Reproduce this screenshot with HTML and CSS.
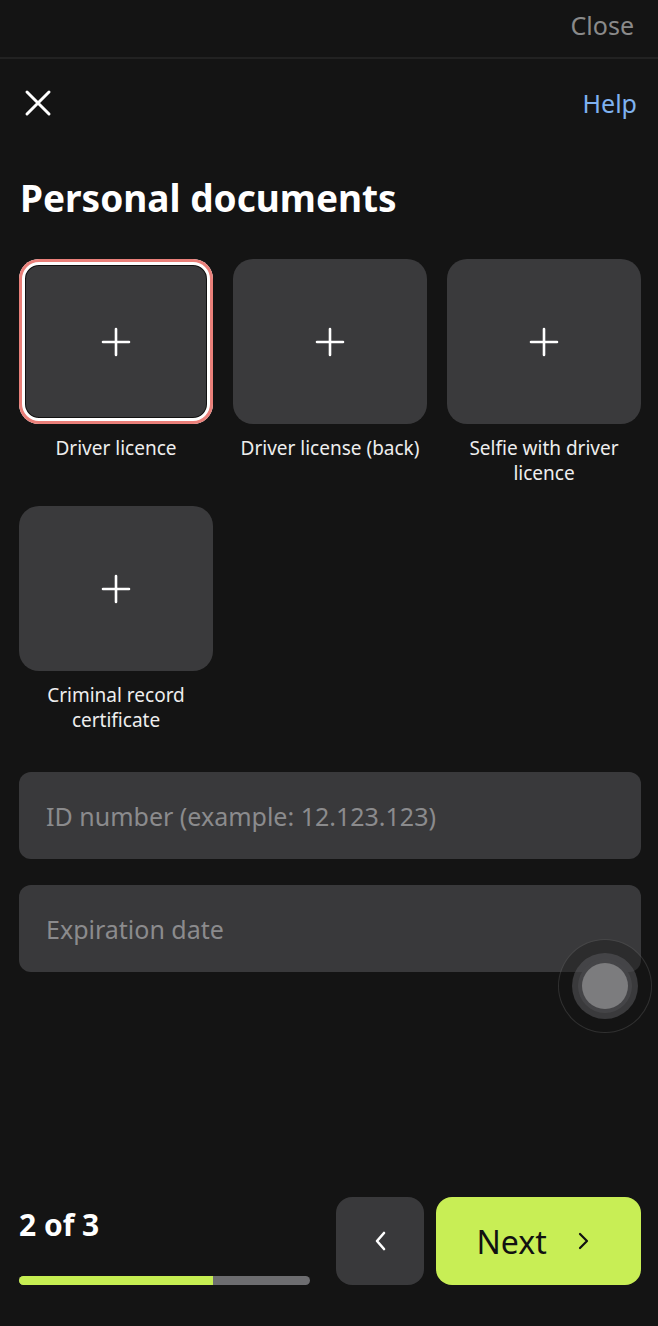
FILE: index.html
```html
<!DOCTYPE html>
<html>
<head>
    <title>Personal documents</title>
    <link rel="stylesheet" href="styles.css">
</head>
<body>
    <div class="page">
        <div class="topbar">
            <span class="close-link">Close</span>
        </div>

        <div class="header">
            <svg class="x-icon" width="28" height="28" viewBox="0 0 28 28">
                <path d="M3 3 L25 25 M25 3 L3 25" stroke="#fff" stroke-width="3" stroke-linecap="round"/>
            </svg>
            <span class="help">Help</span>
        </div>

        <h1>Personal documents</h1>

        <div class="grid">
            <div class="doc">
                <div class="tile selected">
                    <svg class="plus" width="30" height="30" viewBox="0 0 30 30"><path d="M15 2 V28 M2 15 H28" stroke="#fff" stroke-width="2.6" stroke-linecap="round"/></svg>
                </div>
                <div class="label">Driver licence</div>
            </div>
            <div class="doc">
                <div class="tile">
                    <svg class="plus" width="30" height="30" viewBox="0 0 30 30"><path d="M15 2 V28 M2 15 H28" stroke="#fff" stroke-width="2.6" stroke-linecap="round"/></svg>
                </div>
                <div class="label">Driver license (back)</div>
            </div>
            <div class="doc">
                <div class="tile">
                    <svg class="plus" width="30" height="30" viewBox="0 0 30 30"><path d="M15 2 V28 M2 15 H28" stroke="#fff" stroke-width="2.6" stroke-linecap="round"/></svg>
                </div>
                <div class="label">Selfie with driver licence</div>
            </div>
            <div class="doc">
                <div class="tile">
                    <svg class="plus" width="30" height="30" viewBox="0 0 30 30"><path d="M15 2 V28 M2 15 H28" stroke="#fff" stroke-width="2.6" stroke-linecap="round"/></svg>
                </div>
                <div class="label">Criminal record certificate</div>
            </div>
        </div>

        <div class="fields">
            <div class="field">ID number (example: 12.123.123)</div>
            <div class="field">Expiration date</div>
        </div>

        <div class="spacer"></div>

        <div class="footer">
            <div class="progress">
                <div class="step">2 of 3</div>
                <div class="bar"><div class="bar-fill" style="width: 66.7%"></div></div>
            </div>
            <div class="btn back">
                <svg width="14" height="22" viewBox="0 0 14 22"><path d="M11 3 L4 11 L11 19" fill="none" stroke="#fff" stroke-width="2.6" stroke-linecap="round" stroke-linejoin="round"/></svg>
            </div>
            <div class="btn next">
                <span>Next</span>
                <svg width="14" height="22" viewBox="0 0 14 22"><path d="M3 4 L10 11 L3 18" fill="none" stroke="#111" stroke-width="2.2" stroke-linecap="round" stroke-linejoin="round"/></svg>
            </div>
        </div>

        <div class="touch">
            <div class="touch-mid"><div class="touch-dot"></div></div>
        </div>
    </div>
</body>
</html>
```

FILE: styles.css
```css
body {
    margin: 0;
    background-color: #141414;
    font-family: "Noto Sans", "Open Sans", sans-serif;
    color: #fff;
}
.page {
    position: relative;
    height: 1326px;
    display: flex;
    flex-direction: column;
}
.topbar {
    height: 59px;
    border-bottom: 2px solid #222;
    display: flex;
    justify-content: flex-end;
    align-items: flex-start;
    padding-right: 24px;
    box-sizing: border-box;
}
.close-link {
    color: #8a8a8a;
    font-size: 25px;
    line-height: 50px;
}
.header {
    height: 88px;
    display: flex;
    justify-content: space-between;
    align-items: center;
    padding: 0 21px 0 24px;
}
.help {
    color: #7fb2f0;
    font-size: 25px;
}
h1 {
    margin: 26px 20px 0;
    font-size: 37px;
    font-weight: 700;
    line-height: 50px;
}
.grid {
    display: grid;
    grid-template-columns: repeat(3, 194px);
    column-gap: 20px;
    row-gap: 20px;
    padding: 0 17px 0 19px;
    margin-top: 36px;
}
.tile {
    height: 165px;
    border-radius: 20px;
    background-color: #3a3a3c;
    display: flex;
    align-items: center;
    justify-content: center;
}
.tile.selected {
    box-shadow: inset 0 0 0 3px #ea807a, inset 0 0 0 6px #fff, inset 0 0 0 7px #111;
}
.label {
    margin-top: 12px;
    font-size: 19px;
    line-height: 25px;
    text-align: center;
    color: #eee;
    padding: 0 2px;
}
.fields {
    margin: 39px 17px 0 19px;
    display: flex;
    flex-direction: column;
    gap: 26px;
}
.field {
    height: 87px;
    border-radius: 12px;
    background-color: #39393b;
    color: #8b8b8d;
    font-size: 25px;
    display: flex;
    align-items: center;
    padding-left: 27px;
}
.spacer {
    flex: 1;
}
.footer {
    display: flex;
    align-items: stretch;
    padding: 0 17px 41px 19px;
}
.progress {
    width: 292px;
    display: flex;
    flex-direction: column;
    justify-content: space-between;
    padding-top: 8px;
}
.step {
    font-size: 30px;
    font-weight: 700;
    line-height: 40px;
}
.bar {
    height: 9px;
    border-radius: 5px;
    background-color: #6d6d70;
    overflow: hidden;
}
.bar-fill {
    height: 100%;
    background-color: #c6ee52;
}
.btn {
    height: 88px;
    border-radius: 16px;
    display: flex;
    align-items: center;
    justify-content: center;
}
.back {
    width: 88px;
    margin-left: 26px;
    background-color: #39393b;
}
.next {
    width: 205px;
    margin-left: 12px;
    box-sizing: border-box;
    padding-right: 10px;
    background-color: #c8ee55;
    color: #111;
    font-size: 32px;
    gap: 30px;
}
.touch {
    position: absolute;
    left: 558px;
    top: 939px;
    width: 92px;
    height: 92px;
    border-radius: 50%;
    border: 1px solid rgba(255, 255, 255, 0.12);
    background-color: rgba(20, 20, 20, 0.35);
    display: flex;
    align-items: center;
    justify-content: center;
}
.touch-mid {
    width: 66px;
    height: 66px;
    border-radius: 50%;
    background-color: rgba(90, 90, 92, 0.55);
    display: flex;
    align-items: center;
    justify-content: center;
}
.touch-dot {
    width: 46px;
    height: 46px;
    border-radius: 50%;
    background-color: #7c7c7e;
    box-shadow: 0 0 0 4px rgba(70, 70, 72, 0.9);
}
```
